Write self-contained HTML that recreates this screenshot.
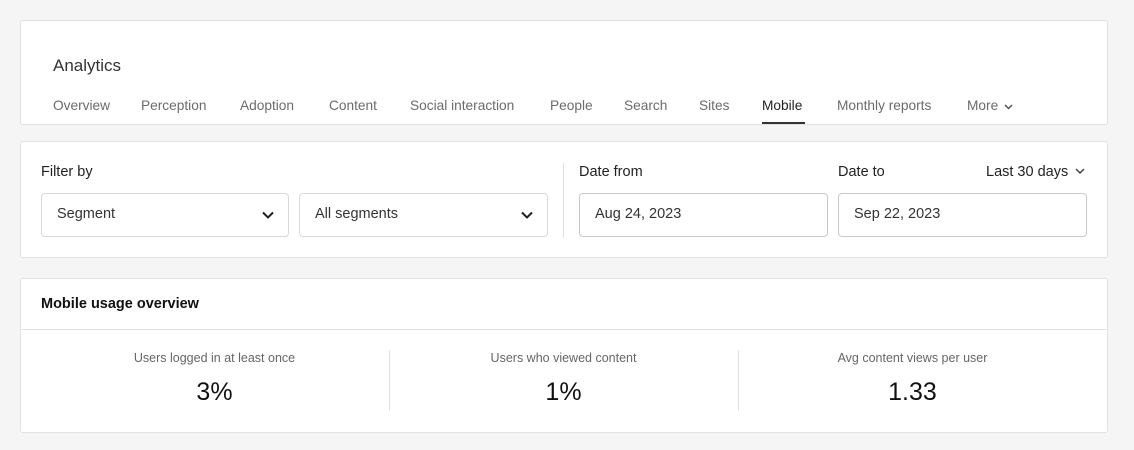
<!DOCTYPE html><html><head><style>
body{margin:0;background:#f5f5f5;font-family:"Liberation Sans",sans-serif;width:1134px;height:450px;overflow:hidden;position:relative;color:#222}
.card{position:absolute;left:20px;width:1086px;background:#fff;border:1px solid #e2e2e2;border-radius:3px}
.a{position:absolute;white-space:nowrap}
.tab{position:absolute;top:98px;font-size:13.7px;color:#6b6b6b}
.box{position:absolute;top:51px;height:44px;border:1px solid #d9d9d9;border-radius:4px;box-sizing:border-box;font-size:14.5px;color:#333;padding:12px 15px}
.chev{position:absolute;right:14px;top:17px}
.lbl{position:absolute;top:351px;width:349px;text-align:center;font-size:12.5px;color:#666}
.val{position:absolute;top:378px;width:349px;text-align:center;font-size:25px;color:#111}
</style></head><body>
<div class="card" style="top:20px;height:103px"></div>
<div class="a" style="left:53px;top:56px;font-size:17px;color:#333">Analytics</div>
<div class="tab" style="left:53px">Overview</div>
<div class="tab" style="left:141px">Perception</div>
<div class="tab" style="left:240px">Adoption</div>
<div class="tab" style="left:329px">Content</div>
<div class="tab" style="left:410px">Social interaction</div>
<div class="tab" style="left:550px">People</div>
<div class="tab" style="left:624px">Search</div>
<div class="tab" style="left:699px">Sites</div>
<div class="tab" style="left:762px;color:#222">Mobile</div>
<div class="a" style="left:762px;top:122px;width:43px;height:2px;background:#333"></div>
<div class="tab" style="left:837px">Monthly reports</div>
<div class="tab" style="left:967px">More <svg width="9" height="6" viewBox="0 0 9 6" style="margin-left:2px"><path d="M1 1l3.5 3.5L8 1" fill="none" stroke="#555" stroke-width="1.5"/></svg></div>

<div class="card" style="top:141px;height:115px">
<div class="a" style="left:20px;top:22px;font-size:14.5px">Filter by</div>
<div class="box" style="left:20px;width:248px">Segment<svg class="chev" width="12" height="8" viewBox="0 0 12 8"><path d="M1 1.5l5 5 5-5" fill="none" stroke="#222" stroke-width="2"/></svg></div>
<div class="box" style="left:278px;width:249px">All segments<svg class="chev" width="12" height="8" viewBox="0 0 12 8"><path d="M1 1.5l5 5 5-5" fill="none" stroke="#222" stroke-width="2"/></svg></div>
<div class="a" style="left:542px;top:21px;width:1px;height:75px;background:#e0e0e0"></div>
<div class="a" style="left:558px;top:22px;font-size:14.5px">Date from</div>
<div class="box" style="left:558px;width:249px;border-color:#c8c8c8">Aug 24, 2023</div>
<div class="a" style="left:817px;top:22px;font-size:14.5px">Date to</div>
<div class="a" style="left:965px;top:22px;font-size:14.5px">Last 30 days <svg width="10" height="6" viewBox="0 0 10 6" style="margin-left:3px;vertical-align:2px"><path d="M1 1l4 4 4-4" fill="none" stroke="#444" stroke-width="1.5"/></svg></div>
<div class="box" style="left:817px;width:249px;border-color:#c8c8c8">Sep 22, 2023</div>
</div>

<div class="card" style="top:278px;height:153px">
<div class="a" style="left:20px;top:17px;font-size:14.5px;font-weight:bold;color:#111">Mobile usage overview</div>
<div class="a" style="left:0;top:50px;width:1086px;height:1px;background:#e2e2e2"></div>
<div class="a" style="left:368px;top:71px;width:1px;height:61px;background:#e2e2e2"></div>
<div class="a" style="left:717px;top:71px;width:1px;height:61px;background:#e2e2e2"></div>
</div>
<div class="lbl" style="left:40px">Users logged in at least once</div>
<div class="val" style="left:40px">3%</div>
<div class="lbl" style="left:389px">Users who viewed content</div>
<div class="val" style="left:389px">1%</div>
<div class="lbl" style="left:738px">Avg content views per user</div>
<div class="val" style="left:738px">1.33</div>
</body></html>
